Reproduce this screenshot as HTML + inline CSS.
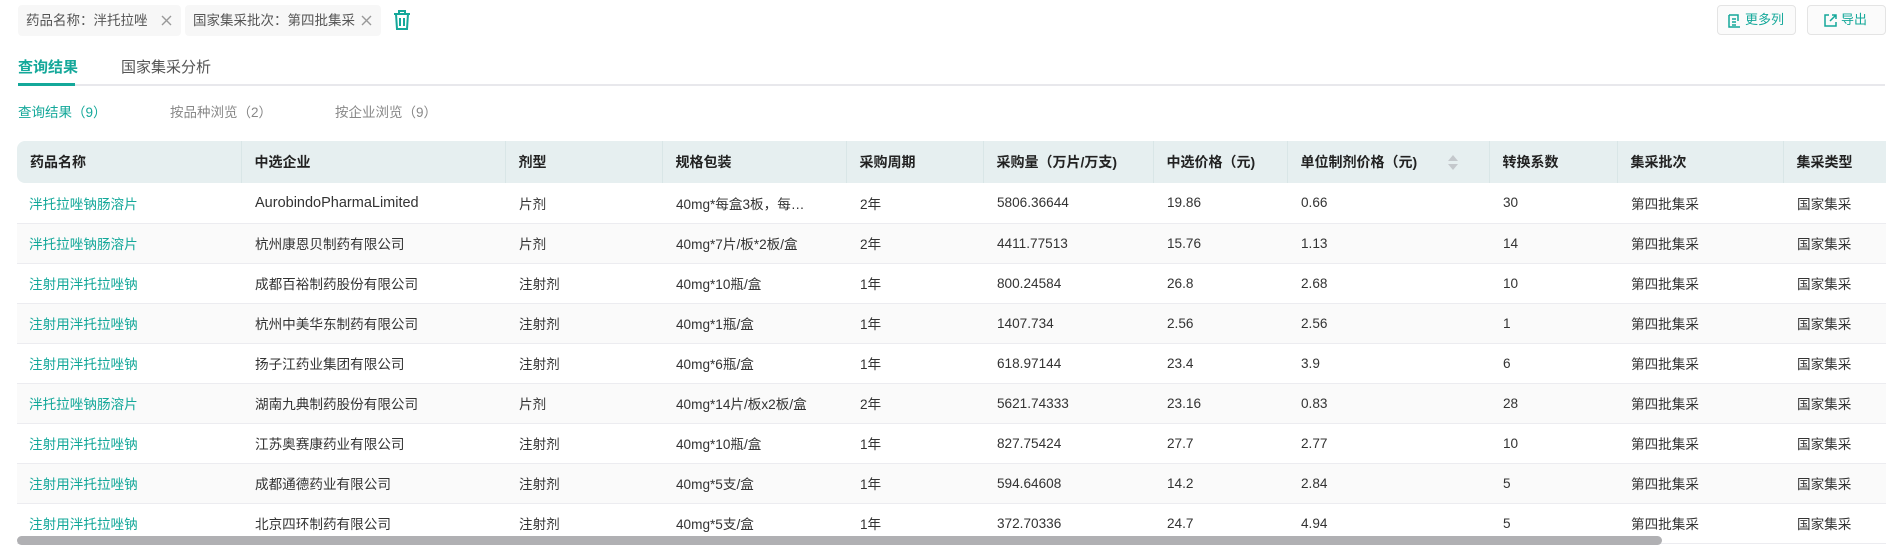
<!DOCTYPE html>
<html><head><meta charset="utf-8"><style>
*{margin:0;padding:0;box-sizing:border-box}
body{width:1895px;height:557px;overflow:hidden;background:#fff;font-family:"Liberation Sans","Noto Sans CJK SC",sans-serif;color:#333;font-size:13px;position:relative}
.tag{position:absolute;top:5px;height:31px;background:#f7f7f7;border-radius:4px;color:#555;font-size:13.5px;line-height:31px;padding-left:8px}
.tag svg{position:absolute;right:9px;top:10px}
.btn{position:absolute;top:5px;height:30px;border:1px solid #e4e4e4;border-radius:4px;background:#fbfbfb;color:#14a89a;font-size:13px;line-height:28px}
.tab{position:absolute;top:56px;font-size:15px}
.sub{position:absolute;top:101px;font-size:13.5px;color:#888}
table{position:absolute;left:17px;top:141px;width:1869px;border-collapse:collapse;table-layout:fixed}
th{height:42px;background:#e6eff0;text-align:left;font-weight:bold;font-size:14px;color:#222;padding-left:13px;border-right:1px solid #d9e6e7}
th:first-child{border-radius:8px 0 0 8px}
th:last-child{border-right:none}
td{height:40px;padding-left:14px;font-size:13.6px;color:#333;border-bottom:1px solid #ececf0;white-space:nowrap;overflow:hidden}
td:first-child{color:#14a89a;padding-left:12px}
tr:nth-child(odd) td{background:#fafafa}
</style></head><body>
<div class="tag" style="left:18px;width:163px">药品名称：泮托拉唑<svg width="11" height="11" viewBox="0 0 11 11" stroke="#999" stroke-width="1.4"><path d="M1 1l9 9M10 1l-9 9"/></svg></div>
<div class="tag" style="left:185px;width:196px">国家集采批次：第四批集采<svg width="11" height="11" viewBox="0 0 11 11" stroke="#999" stroke-width="1.4"><path d="M1 1l9 9M10 1l-9 9"/></svg></div>
<svg style="position:absolute;left:393px;top:9px" width="18" height="22" viewBox="0 0 18 22" fill="none" stroke="#14a89a" stroke-width="2"><path d="M1 5h16M6 5V2h6v3M3 5l1 15h10l1-15M7 9v8M11 9v8"/></svg>
<div class="btn" style="left:1717px;width:79px"><svg style="position:absolute;left:10px;top:8px" width="13" height="14" viewBox="0 0 13 14" fill="none" stroke="#14a89a" stroke-width="1.5"><path d="M1 1h9v6M1 1v12h11M4 5h4M4 8h4M4 11h4"/></svg><span style="position:absolute;left:27px">更多列</span></div>
<div class="btn" style="left:1807px;width:79px"><svg style="position:absolute;left:16px;top:8px" width="13" height="13" viewBox="0 0 13 13" fill="none" stroke="#14a89a" stroke-width="1.5"><path d="M5 1H1v11h11V8M8 1h4v4M12 1L6 7"/></svg><span style="position:absolute;left:33px">导出</span></div>
<div class="tab" style="left:18px;color:#14a89a;font-weight:bold">查询结果</div>
<div class="tab" style="left:121px;color:#555">国家集采分析</div>
<div style="position:absolute;left:18px;top:84px;width:1867px;height:2px;background:#e8e8ec"></div>
<div style="position:absolute;left:18px;top:83px;width:57px;height:3px;background:#14a89a"></div>
<div class="sub" style="left:18px;color:#14a89a">查询结果（9）</div>
<div class="sub" style="left:170px">按品种浏览（2）</div>
<div class="sub" style="left:335px">按企业浏览（9）</div>
<table>
<colgroup><col style="width:224px"><col style="width:264px"><col style="width:157px"><col style="width:184px"><col style="width:137px"><col style="width:170px"><col style="width:134px"><col style="width:202px"><col style="width:128px"><col style="width:166px"><col style="width:103px"></colgroup>
<tr><th>药品名称</th><th>中选企业</th><th>剂型</th><th>规格包装</th><th>采购周期</th><th>采购量（万片/万支)</th><th>中选价格（元)</th><th style="position:relative">单位制剂价格（元)<svg style="position:absolute;left:160px;top:14px" width="10" height="15" viewBox="0 0 10 15" fill="#c4c8cc"><path d="M5 0l5 6H0zM0 9h10l-5 6z"/></svg></th><th>转换系数</th><th>集采批次</th><th>集采类型</th></tr>
<tr><td>泮托拉唑钠肠溶片</td><td style="font-size:14.5px">AurobindoPharmaLimited</td><td>片剂</td><td>40mg*每盒3板，每…</td><td>2年</td><td>5806.36644</td><td>19.86</td><td>0.66</td><td>30</td><td>第四批集采</td><td>国家集采</td></tr>
<tr><td>泮托拉唑钠肠溶片</td><td>杭州康恩贝制药有限公司</td><td>片剂</td><td>40mg*7片/板*2板/盒</td><td>2年</td><td>4411.77513</td><td>15.76</td><td>1.13</td><td>14</td><td>第四批集采</td><td>国家集采</td></tr>
<tr><td>注射用泮托拉唑钠</td><td>成都百裕制药股份有限公司</td><td>注射剂</td><td>40mg*10瓶/盒</td><td>1年</td><td>800.24584</td><td>26.8</td><td>2.68</td><td>10</td><td>第四批集采</td><td>国家集采</td></tr>
<tr><td>注射用泮托拉唑钠</td><td>杭州中美华东制药有限公司</td><td>注射剂</td><td>40mg*1瓶/盒</td><td>1年</td><td>1407.734</td><td>2.56</td><td>2.56</td><td>1</td><td>第四批集采</td><td>国家集采</td></tr>
<tr><td>注射用泮托拉唑钠</td><td>扬子江药业集团有限公司</td><td>注射剂</td><td>40mg*6瓶/盒</td><td>1年</td><td>618.97144</td><td>23.4</td><td>3.9</td><td>6</td><td>第四批集采</td><td>国家集采</td></tr>
<tr><td>泮托拉唑钠肠溶片</td><td>湖南九典制药股份有限公司</td><td>片剂</td><td>40mg*14片/板x2板/盒</td><td>2年</td><td>5621.74333</td><td>23.16</td><td>0.83</td><td>28</td><td>第四批集采</td><td>国家集采</td></tr>
<tr><td>注射用泮托拉唑钠</td><td>江苏奥赛康药业有限公司</td><td>注射剂</td><td>40mg*10瓶/盒</td><td>1年</td><td>827.75424</td><td>27.7</td><td>2.77</td><td>10</td><td>第四批集采</td><td>国家集采</td></tr>
<tr><td>注射用泮托拉唑钠</td><td>成都通德药业有限公司</td><td>注射剂</td><td>40mg*5支/盒</td><td>1年</td><td>594.64608</td><td>14.2</td><td>2.84</td><td>5</td><td>第四批集采</td><td>国家集采</td></tr>
<tr><td>注射用泮托拉唑钠</td><td>北京四环制药有限公司</td><td>注射剂</td><td>40mg*5支/盒</td><td>1年</td><td>372.70336</td><td>24.7</td><td>4.94</td><td>5</td><td>第四批集采</td><td>国家集采</td></tr>
</table>
<div style="position:absolute;left:17px;top:536px;width:1645px;height:9px;background:#b0b0b3;border-radius:5px"></div>
</body></html>
